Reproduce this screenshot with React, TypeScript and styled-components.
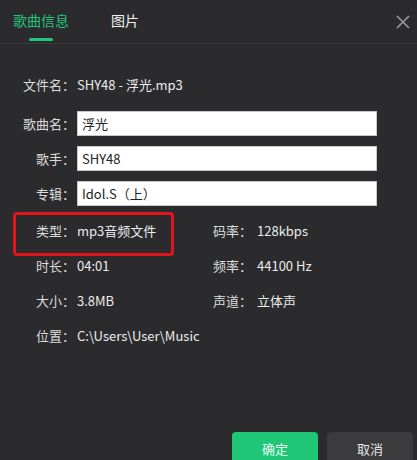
import React from "react";
import styled, { createGlobalStyle } from "styled-components";

const GlobalStyle = createGlobalStyle`
  html, body {
    margin: 0;
    padding: 0;
    background: #2b2b2d;
    overflow: hidden;
  }
  body {
    font-family: "Noto Sans CJK SC", "Noto Sans", sans-serif;
  }
`;

interface InfoItem {
  label: string;
  value: string;
  marked?: boolean;
}

const fields = [
  { label: "歌曲名：", value: "浮光" },
  { label: "歌手：", value: "SHY48" },
  { label: "专辑：", value: "Idol.S（上）" },
];

const infoRows: InfoItem[][] = [
  [{ label: "类型：", value: "mp3音频文件", marked: true }, { label: "码率：", value: "128kbps" }],
  [{ label: "时长：", value: "04:01" }, { label: "频率：", value: "44100 Hz" }],
  [{ label: "大小：", value: "3.8MB" }, { label: "声道：", value: "立体声" }],
  [{ label: "位置：", value: "C:\\Users\\User\\Music" }],
];

const CloseIcon = () => (
  <svg width="14" height="14" viewBox="0 0 14 14">
    <path d="M1 1L13 13M13 1L1 13" stroke="#9a9a9c" strokeWidth="1.6" />
  </svg>
);

const App: React.FC = () => {
  return (
    <Dialog>
      <GlobalStyle />
      <TabBar>
        <Tab active>歌曲信息</Tab>
        <Tab>图片</Tab>
        <CloseButton>
          <CloseIcon />
        </CloseButton>
      </TabBar>
      <Content>
        <Row>
          <Label>文件名：</Label>
          <Value>SHY48 - 浮光.mp3</Value>
        </Row>
        <Fields>
          {fields.map((f) => (
            <Row key={f.label}>
              <Label>{f.label}</Label>
              <Input defaultValue={f.value} />
            </Row>
          ))}
        </Fields>
        <InfoGrid>
          {infoRows.map((row, i) => (
            <InfoRow key={i}>
              {row.map((item) => (
                <InfoCell key={item.label} marked={item.marked}>
                  <Label>{item.label}</Label>
                  <Value>{item.value}</Value>
                </InfoCell>
              ))}
            </InfoRow>
          ))}
        </InfoGrid>
      </Content>
      <Footer>
        <Button primary>确定</Button>
        <Button>取消</Button>
      </Footer>
    </Dialog>
  );
};

const Dialog = styled.div`
  width: 417px;
  height: 470px;
  background: #2b2b2d;
  display: flex;
  flex-direction: column;
`;

const TabBar = styled.div`
  height: 43px;
  border-bottom: 1px solid #3b3b3d;
  display: flex;
  align-items: stretch;
  padding-left: 13px;
`;

const Tab = styled.div<{ active?: boolean }>`
  position: relative;
  font-size: 14px;
  line-height: 40px;
  margin-right: 42px;
  color: ${(p) => (p.active ? "#22c57b" : "#f2f2f2")};
  &::after {
    content: "";
    display: ${(p) => (p.active ? "block" : "none")};
    position: absolute;
    left: 50%;
    bottom: 2px;
    width: 24px;
    height: 3px;
    margin-left: -12px;
    border-radius: 2px;
    background: #22c57b;
  }
`;

const CloseButton = styled.div`
  margin-left: auto;
  width: 14px;
  padding: 10px 7px 0 0;
`;

const Content = styled.div`
  flex: 1;
  padding-top: 28px;
`;

const Row = styled.div`
  display: flex;
  align-items: center;
  height: 25px;
`;

const Label = styled.span`
  width: 75px;
  flex-shrink: 0;
  text-align: right;
  font-size: 13px;
  color: #dcdcdc;
  white-space: nowrap;
`;

const Value = styled.span`
  margin-left: 2px;
  font-size: 13px;
  color: #ececec;
  white-space: nowrap;
`;

const Fields = styled.div`
  display: flex;
  flex-direction: column;
  gap: 10px;
  margin-top: 14px;
`;

const Input = styled.input`
  margin-left: 2px;
  width: 300px;
  height: 25px;
  box-sizing: border-box;
  border: 1px solid #c8c8c8;
  background: #ffffff;
  padding: 0 4px;
  font-family: "Noto Sans CJK SC", "Noto Sans", sans-serif;
  font-size: 13px;
  color: #222;
  outline: none;
`;

const InfoGrid = styled.div`
  display: flex;
  flex-direction: column;
  gap: 10px;
  margin-top: 12px;
`;

const InfoRow = styled.div`
  display: flex;
  height: 25px;
`;

const InfoCell = styled.div<{ marked?: boolean }>`
  position: relative;
  display: flex;
  align-items: center;
  width: 213px;
  flex-shrink: 0;
  &:nth-child(2) ${Label} {
    width: 39px;
    text-align: left;
  }
  &:nth-child(2) ${Value} {
    margin-left: 5px;
  }
  &::after {
    content: "";
    display: ${(p) => (p.marked ? "block" : "none")};
    position: absolute;
    left: 13px;
    top: -6px;
    width: 161px;
    height: 44px;
    box-sizing: border-box;
    border: 3px solid #e3141d;
    border-radius: 4px;
  }
`;

const Footer = styled.div`
  display: flex;
  justify-content: flex-end;
  gap: 9px;
  padding: 0 4px 6px 0;
`;

const Button = styled.button<{ primary?: boolean }>`
  width: 86px;
  height: 32px;
  border: none;
  border-radius: 4px;
  font-family: "Noto Sans CJK SC", "Noto Sans", sans-serif;
  font-size: 13px;
  color: ${(p) => (p.primary ? "#eafff3" : "#e6e6e6")};
  background: ${(p) => (p.primary ? "#1ec675" : "#3b3b3d")};
`;

export default App;
